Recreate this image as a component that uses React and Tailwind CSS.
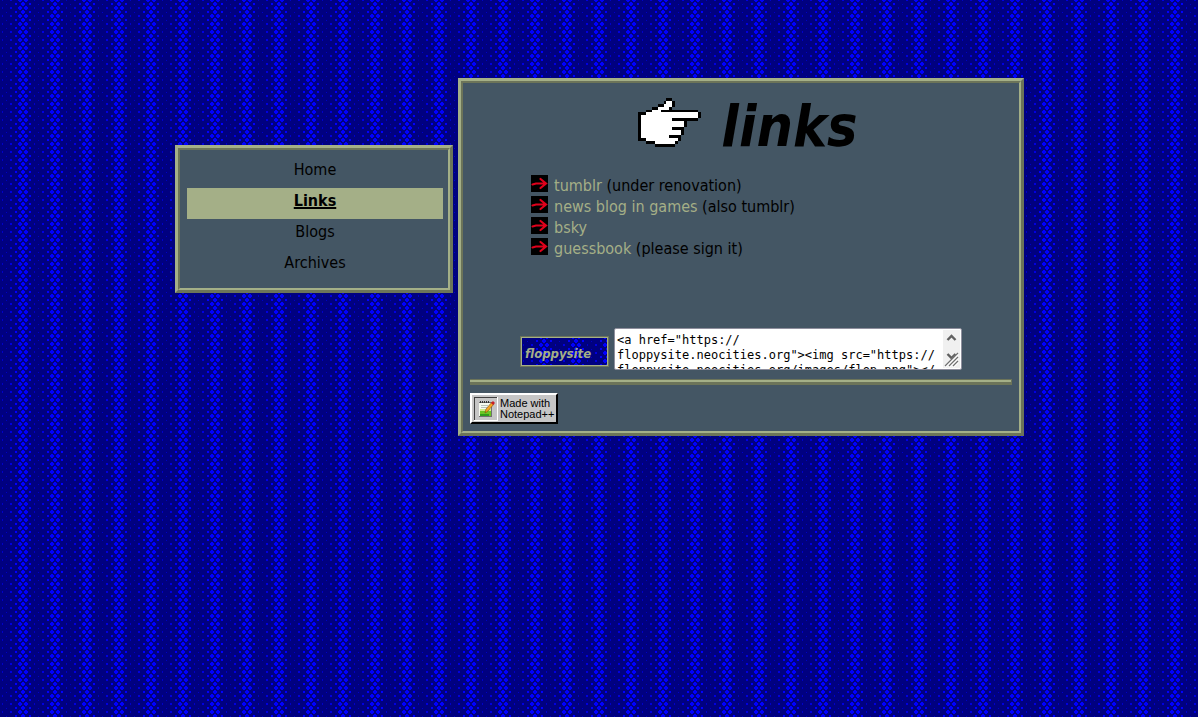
import { useId } from 'react'

const NAV_ITEMS = [
  { label: 'Home', href: '#home' },
  { label: 'Links', href: '#links', active: true },
  { label: 'Blogs', href: '#blogs' },
  { label: 'Archives', href: '#archives' },
]

const LINKS = [
  { label: 'tumblr', href: '#tumblr', note: '(under renovation)' },
  { label: 'news blog in games', href: '#news', note: '(also tumblr)' },
  { label: 'bsky', href: '#bsky' },
  { label: 'guessbook', href: '#guessbook', note: '(please sign it)' },
]

const EMBED_CODE = `<a href="https://
floppysite.neocities.org"><img src="https://
floppysite.neocities.org/images/flop.png"></
a>`

// 32x8 tile, the dots grow towards x = 23
function DotPattern({ className }) {
  const id = useId()
  return (
    <svg className={className} width="100%" height="100%" shapeRendering="crispEdges" aria-hidden="true">
      <defs>
        <pattern id={id} width="32" height="8" patternUnits="userSpaceOnUse">
          <rect width="32" height="8" fill="#000080" />
          <path
            fill="#0000ff"
            d="M22 2h2v1h1v2h-1v1h-2v-1h-1v-2h1z M18 0h4v1h-1v1h-2v-1h-1z M19 6h2v1h1v1h-4v-1h1z M24 0h4v1h-1v1h-2v-1h-1z M25 6h2v1h1v1h-4v-1h1z M15 3h2v2h-2z M29 3h2v2h-2z"
          />
          <path fill="#0000e0" d="M10 7h2v1h-2z M10 0h2v1h-2z" />
          <path fill="#0000c8" d="M2 0h1v1h-1z M2 7h1v1h-1z M6 4h1v1h-1z" />
        </pattern>
      </defs>
      <rect width="100%" height="100%" fill={`url(#${id})`} />
    </svg>
  )
}

function PointingHand() {
  return (
    <svg width="63" height="49" viewBox="24 24 189 147" shapeRendering="crispEdges" aria-hidden="true">
      <path d="M108 24H126V33H135V51H126V60H204V66H213V84H204V93H171V111H162V135H153V153H144V162H135V171H75V162H48V153H24V66H48V60H66V51H84V42H102V33H108Z" />
      <path
        fill="#fff"
        d="M108 33H126V51H117V60H93V66H204V84H126V93H162V111H126V120H153V135H117V144H144V153H135V162H75V153H48V144H33V75H48V66H66V60H84V51H102V42H108Z"
      />
    </svg>
  )
}

function ArrowBullet() {
  return (
    <svg className="shrink-0" width="17" height="17" viewBox="0 0 17 17" aria-hidden="true">
      <rect width="17" height="17" />
      <path
        d="M1.500 9.500L5 8.500L15 8.500M9.500 4L15 8.500L9.500 13"
        fill="none"
        stroke="#e0001b"
        strokeWidth="2.200"
        strokeLinecap="round"
      />
    </svg>
  )
}

function NotepadIcon() {
  return (
    <svg width="24" height="24" viewBox="0 0 24 24" shapeRendering="crispEdges" aria-hidden="true">
      <path d="M0 0h24v24h-24z" fill="#fff" />
      <path d="M0 0h23v23h-23z" fill="#404040" />
      <path d="M1 1h22v22h-22z" fill="#c6c6c6" />
      <path d="M5 5h13v15h-13z" fill="#707070" />
      <path d="M5 6h12v13h-12z" fill="#f6faf0" />
      <path d="M6 12h11v2h-11z" fill="#cfe88a" />
      <path d="M6 14h11v5h-11z" fill="#6cc524" />
      <path d="M6 17h9v2h-9z" fill="#2f9c1c" />
      <path d="M6 4h1v2h-1z M8 4h1v2h-1z M10 4h1v2h-1z M12 4h1v2h-1z M14 4h1v2h-1z" fill="#333" />
      <path d="M7 8h7v1h-7z M7 10h6v1h-6z" fill="#b9c4b9" />
      <g shapeRendering="auto">
        <path d="M11 16L12 12L18 5L20 7L14 14Z" fill="#f5a623" stroke="#7a4a10" strokeWidth="0.6" />
        <path d="M17 6L19 4L21 6L19 8Z" fill="#c81e28" />
      </g>
    </svg>
  )
}

function ScrollBar() {
  return (
    <svg
      className="absolute top-0.5 right-0.5"
      width="17"
      height="38"
      viewBox="0 0 17 38"
      fill="none"
      aria-hidden="true"
    >
      <rect width="17" height="38" fill="#f0f0f0" />
      <path d="M4.500 10L8.500 6L12.500 10" stroke="#606060" strokeWidth="2.400" />
      <path d="M4.500 24L8.500 28L12.500 24" stroke="#606060" strokeWidth="2.400" />
      <path d="M2 37L15 24M6 37L15 28M10 37L15 32" stroke="#fff" strokeWidth="2" />
      <path d="M2 36L15 23M6 36L15 27M10 36L15 31" stroke="#707070" strokeWidth="1.200" />
    </svg>
  )
}

// Two nested borders make the ridge: 3px outside, 2px inside
function Panel({ className, children }) {
  return (
    <div className={`border-3 border-t-[#a4af87] border-r-[#6c7459] border-b-[#6c7459] border-l-[#a4af87] ${className}`}>
      <div className="border-2 border-t-[#6c7459] border-r-[#a4af87] border-b-[#a4af87] border-l-[#6c7459] bg-[#445664]">
        {children}
      </div>
    </div>
  )
}

function Nav() {
  return (
    <Panel className="mt-[67px] w-[278px] shrink-0">
      <nav className="py-[7px] pr-[5px] pl-[7px]">
        <ul className="text-center">
          {NAV_ITEMS.map((item) => (
            <li key={item.label}>
              <a
                href={item.href}
                className={`block h-[31px] leading-[26px] text-black ${item.active ? 'bg-[#a4af87] font-bold underline decoration-2' : ''}`}
              >
                {item.label}
              </a>
            </li>
          ))}
        </ul>
      </nav>
    </Panel>
  )
}

export default function App() {
  return (
    <div className="relative min-h-screen font-['DejaVu_Sans_Condensed','DejaVu_Sans',sans-serif] text-base text-black">
      <DotPattern className="absolute inset-0" />

      <div className="relative flex items-start justify-center gap-[5px] pt-[78px] pl-px">
        <Nav />

        <Panel className="w-full max-w-[566px]">
          <main className="p-[7px]">
            <div className="flex h-[72px] items-start justify-center gap-5 pt-2 pl-3.5">
              <PointingHand />
              <h1 className="text-[57px] leading-[57px] font-bold italic">links</h1>
            </div>

            <ul className="mt-[13px] pl-[61px]">
              {LINKS.map((link) => (
                <li key={link.label} className="flex h-[21px] items-start gap-1.5 leading-[21px]">
                  <ArrowBullet />
                  <span>
                    <a href={link.href} className="text-[#a4af87]">
                      {link.label}
                    </a>{' '}
                    {link.note}
                  </span>
                </li>
              ))}
            </ul>

            <div className="mt-[69px] flex items-end justify-center gap-[5px]">
              <a
                href="#floppysite"
                className="relative mb-[3px] flex h-[31px] w-[89px] overflow-hidden border border-[#6c7459] text-[13px] font-bold text-[#a4af87] italic"
              >
                <DotPattern className="absolute inset-0" />
                <span className="relative flex h-full w-full items-center border border-[#a4af87] pt-1 pl-[3px]">
                  floppysite
                </span>
              </a>
              <div className="relative h-[42px] w-[348px]">
                <textarea
                  aria-label="Button code"
                  defaultValue={EMBED_CODE}
                  spellCheck={false}
                  className="block h-full w-full resize-none overflow-hidden rounded-xs border border-[#8f8f9d] bg-white py-1 pl-0.5 font-['DejaVu_Sans_Mono',monospace] text-[12px] leading-[15px] whitespace-pre"
                />
                <ScrollBar />
              </div>
            </div>

            <hr className="mt-[9px] mb-2 h-1.5 border-t border-r border-b-3 border-[#6c7459] bg-[#a4af87]" />

            <a
              href="#notepad"
              className="flex h-[31px] w-[88px] items-center gap-0.5 border-2 border-t-white border-r-black border-b-black border-l-white bg-[#c6c6c6] pl-0.5 font-['Liberation_Sans',Arial,sans-serif] text-[11px] leading-[11px]"
            >
              <NotepadIcon />
              <span>
                Made with
                <br />
                Notepad++
              </span>
            </a>
          </main>
        </Panel>
      </div>
    </div>
  )
}
